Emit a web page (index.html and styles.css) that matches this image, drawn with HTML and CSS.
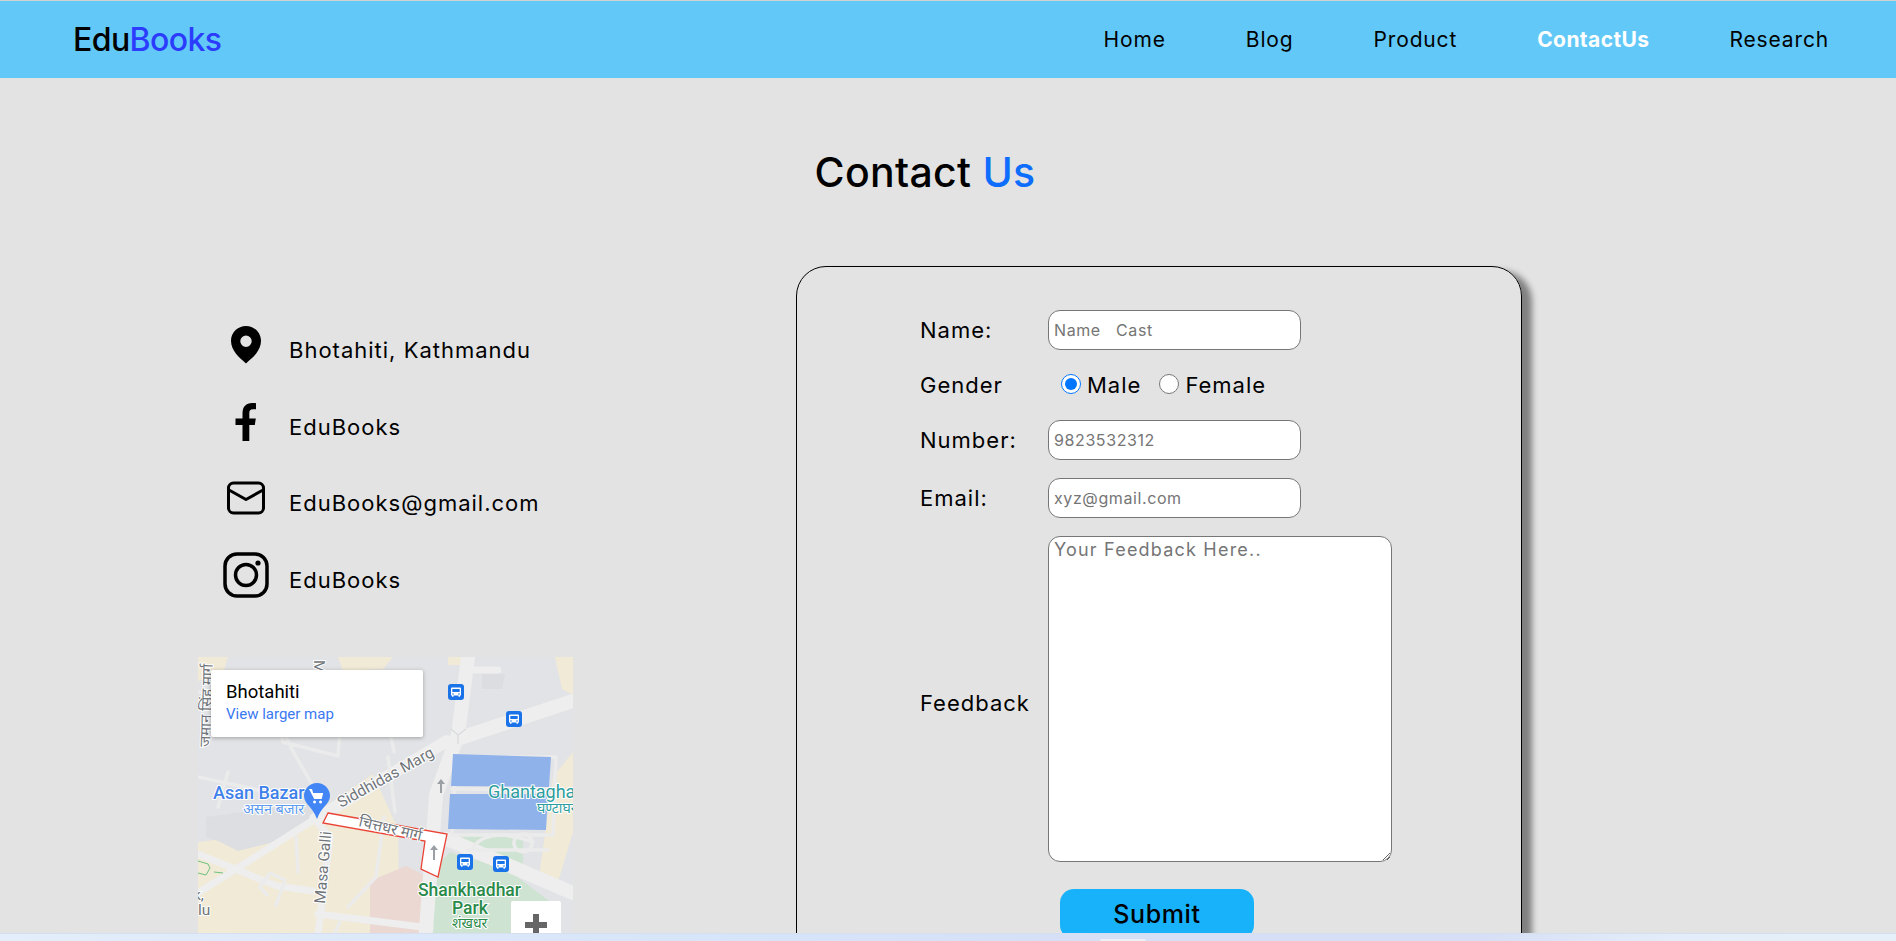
FILE: index.html
```html
<!DOCTYPE html>
<html lang="en">
<head>
    <meta charset="UTF-8">
    <meta name="viewport" content="width=device-width, initial-scale=1.0">
    <title>EduBooks - Contact Us</title>
    <link rel="stylesheet" href="styles.css">
</head>
<body>

<header class="topbar">
    <div class="logo">Edu<span>Books</span></div>
    <nav class="nav">
        <a href="#">Home</a>
        <a href="#">Blog</a>
        <a href="#">Product</a>
        <a href="#" class="active">ContactUs</a>
        <a href="#">Research</a>
    </nav>
</header>

<h1 class="title">Contact <span>Us</span></h1>

<main class="content">
    <section class="side">
        <ul class="info">
            <li>
                <svg class="icon" width="48" height="48" viewBox="0 0 48 48">
                    <path fill-rule="evenodd" d="M24 5C15.7 5 9 11.6 9 19.800c0 5 2 8.700 4.800 12.700C16.800 36.500 20.500 39 24 42.500c3.500-3.500 7.200-6 10.200-10C37 28.500 39 24.800 39 19.800 39 11.600 32.300 5 24 5zm0 9.500a5.700 5.700 0 1 1 0 11.400 5.700 5.700 0 0 1 0-11.400z"/>
                </svg>
                <span>Bhotahiti, Kathmandu</span>
            </li>
            <li>
                <svg class="icon" width="48" height="48" viewBox="0 0 48 48">
                    <path d="M20.500 43V27h-7v-6.500h7v-5.300c0-6.500 3.700-10.200 9.500-10.200 1.700 0 3.200.1 4 .3v6h-3c-2.800 0-3.700 1.500-3.700 3.800v5.400h6.500l-1 6.500h-5.500v16z"/>
                </svg>
                <span>EduBooks</span>
            </li>
            <li>
                <svg class="icon" width="48" height="48" viewBox="0 0 48 48" fill="none" stroke="#000" stroke-width="3" stroke-linecap="round" stroke-linejoin="round">
                    <rect x="6.500" y="9" width="35" height="30" rx="5"/>
                    <path d="M7 16l17 9.500L41 16"/>
                </svg>
                <span>EduBooks@gmail.com</span>
            </li>
            <li>
                <svg class="icon" width="48" height="48" viewBox="0 0 48 48" fill="none" stroke="#000" stroke-width="3.500">
                    <rect x="3" y="3" width="42" height="42" rx="12"/>
                    <circle cx="24" cy="24" r="10.500"/>
                    <circle cx="36" cy="12" r="2.600" fill="#000" stroke="none"/>
                </svg>
                <span>EduBooks</span>
            </li>
        </ul>

        <div class="map">
            <svg class="map-art" width="375" height="300" viewBox="0 0 375 300">
                <symbol id="bus" viewBox="0 0 16 16">
                    <rect width="16" height="16" rx="3" fill="#1a73e8"/>
                    <path fill="#fff" d="M4 3.500h8a1 1 0 0 1 1 1v7H12v1.200h-1.500v-1.200h-5v1.200H4v-1.200H3v-7a1 1 0 0 1 1-1zm.3 1.500v3h7.400V5zM5 9.200a.8.8 0 1 0 0 1.600.8.8 0 0 0 0-1.600zm6 0a.8.8 0 1 0 0 1.600.8.8 0 0 0 0-1.600z"/>
                </symbol>

                <rect width="375" height="300" fill="#e2e3e6"/>
                <!-- land areas -->
                <path fill="#f1ead6" d="M0 185l25-3 7-16 55-4 30-5 58-40 25 55 2 108H0z"/>
                <path fill="#f1ead6" d="M0 0h30l-5 16L0 24zM140 0h55l-10 12-40 2z"/>
                <path fill="#f1ead6" d="M357 0h18v38l-11-6zM355 120l20-25v80l-18 60-17-8zM250 0h20l-3 8h-17z"/>
                <path fill="#dcdee2" d="M8 160l104-14 6 12-30 24-48 12-20-10-12-4z"/>
                <path fill="#ebd8d3" d="M172 224l36-15 20 10-5 81h-51z"/>
                <path fill="#cfe3d2" d="M240 207l12-12 58 18 40 30 2 57H232z"/>
                <path fill="#cfe3d2" d="M262 176l63 2 0 30-71-24z"/>
                <path fill="#dcdde1" d="M284 17h23l-3 15h-20z"/>

                <!-- roads -->
                <g class="road">
                    <path class="road-lg" d="M270 0l-10 78-22 60-12 162M259 82L375 44M249 182L375 236"/>
                    <path class="road-md" d="M117 162L249 84"/>
                    <path class="road-sm" d="M117 162L0 236M117 162l15 19-12 96M0 197l79 32 36 5M120 257l112 14M277 13h23"/>
                    <path class="road-xs" d="M0 35l60 6 20 20 13 30 22 38M75 43l10 42 55 14 3-40 48 10 5 26M0 120l75 16M30 115l-10 35M190 100l7 55M150 250l28-30 8-60M100 215l-2-35M78 248l9-25 -15-7-10 14 7 8M130 290l12-25"/>
                    <path class="road-xs" d="M258 100h100l-3 78H254zM254 132h100"/>
                    <path class="road-xs" d="M275 190c15-18 40-12 60-5M325 195a9 9 0 1 1 .1 0M270 193l80 0"/>
                </g>
                <path fill="none" stroke="#d9dadd" stroke-width="1.200" d="M253 72l7 6 8-6M260 78v9"/>
                <path fill="none" stroke="#6cc27f" stroke-width="1" d="M0 204l10 3 2 4-4 7-8-2M16 215l9 1"/>

                <!-- ponds -->
                <path fill="#8fb2ea" d="M255 97l98 3-2 30-98-1zM252 137h98l-2 36-98-1z"/>

                <!-- selected street -->
                <path fill="#fff" stroke="#ea4335" stroke-width="1.300" d="M130 156l119 21-9 43-17-8 4-28-102-18z"/>

                <!-- labels -->
                <text class="lbl lbl-road" transform="translate(143 151) rotate(-29)">Siddhidas Marg</text>
                <text class="lbl lbl-road" transform="translate(127 247) rotate(-85)">Masa Galli</text>
                <text class="lbl lbl-road lbl-hi" transform="translate(160 169) rotate(13.500)">चित्तधर मार्ग</text>
                <text class="lbl lbl-road lbl-hi" transform="translate(12 90) rotate(-88)">जमान सिंह मार्ग</text>
                <text class="lbl lbl-road" transform="translate(116 3) rotate(90)">Ma</text>
                <text class="lbl lbl-blue" x="15" y="142">Asan Bazar</text>
                <text class="lbl lbl-blue-hi" x="45" y="157">असन बजार</text>
                <text class="lbl lbl-teal" x="290" y="141">Ghantagha</text>
                <text class="lbl lbl-teal-hi" x="339" y="156">घण्टाघर</text>
                <text class="lbl lbl-green" x="220" y="239">Shankhadhar</text>
                <text class="lbl lbl-green" x="254" y="257">Park</text>
                <text class="lbl lbl-green-hi" x="254" y="271">शंखधर</text>
                <text class="lbl lbl-road" x="-5" y="243">k,</text>
                <text class="lbl lbl-road" x="0" y="258">lu</text>

                <!-- arrows -->
                <path fill="#9aa0a6" d="M243 122l-4 5h3v9h2v-9h3zM236 188l-4 5h3v10h2v-10h3z"/>

                <!-- pin -->
                <path fill="#4285f4" d="M119 126c-7.200 0-13 5.800-13 13 0 8 9 11 13 23 4-12 13-15 13-23 0-7.200-5.800-13-13-13z"/>
                <path fill="#fff" d="M111 132h3l1.200 4h10l-1.500 6h-7.500zM116.500 143.500a1.500 1.500 0 1 0 .1 0zM122.500 143.500a1.500 1.500 0 1 0 .1 0z"/>

                <use href="#bus" x="250" y="27" width="16" height="16"/>
                <use href="#bus" x="308" y="54" width="16" height="16"/>
                <use href="#bus" x="259" y="197" width="16" height="16"/>
                <use href="#bus" x="295" y="199" width="16" height="16"/>
            </svg>
            <div class="map-card">
                <div class="map-name">Bhotahiti</div>
                <a href="#" class="map-link">View larger map</a>
            </div>
            <div class="map-zoom">
                <svg width="24" height="24" viewBox="0 0 24 24"><path fill="#666" d="M9 1h6v8h8v6h-8v8H9v-8H1V9h8z"/></svg>
            </div>
        </div>
    </section>

    <form class="contact-box">
        <label for="name">Name:</label>
        <input type="text" id="name" placeholder="Name   Cast">

        <label>Gender</label>
        <div class="gender">
            <input type="radio" name="gender" id="male" checked>
            <label for="male">Male</label>
            <input type="radio" name="gender" id="female">
            <label for="female">Female</label>
        </div>

        <label for="number">Number:</label>
        <input type="text" id="number" placeholder="9823532312">

        <label for="email">Email:</label>
        <input type="email" id="email" placeholder="xyz@gmail.com">

        <label for="feedback" class="feedback-label">Feedback</label>
        <textarea id="feedback" placeholder="Your Feedback Here.."></textarea>

        <button type="submit" class="submit">Submit</button>
    </form>
</main>

<div class="taskbar"><span></span></div>

</body>
</html>
```

FILE: styles.css
```css
html, body {
    height: 941px;
    overflow: hidden;
}
body {
    margin: 0;
    font-family: Inter, "Open Sans", sans-serif;
    background-color: #e3e3e3;
    color: #000;
    border-top: 1px solid #d2d2d2;
    box-sizing: border-box;
}
.topbar {
    height: 77px;
    display: flex;
    align-items: center;
    justify-content: space-between;
    padding: 0 67px 0 73px;
    background-color: #62c8f7;
}
.logo {
    font-size: 32px;
    font-weight: 500;
    letter-spacing: -0.6px;
}
.logo span {
    color: #2b3cff;
}
.nav {
    display: flex;
    gap: 80px;
}
.nav a {
    color: #000;
    font-size: 21px;
    letter-spacing: 0.85px;
    text-decoration: none;
}
.nav a.active {
    color: #fff;
    font-weight: 700;
    letter-spacing: 0.4px;
}
.title {
    margin: 0;
    padding: 63px 46px 0 0;
    height: 188px;
    box-sizing: border-box;
    text-align: center;
    font-size: 41px;
    font-weight: 500;
    letter-spacing: 0.3px;
    line-height: 62px;
}
.title span {
    color: #0d6efd;
}
.content {
    display: flex;
    align-items: flex-start;
    padding-left: 198px;
}
.side {
    width: 375px;
    margin-right: 223px;
    padding-top: 46px;
}
.info {
    list-style: none;
    margin: 0;
    padding: 0 0 0 24px;
}
.info li {
    display: flex;
    align-items: center;
    gap: 19px;
    height: 76.500px;
    font-size: 22px;
    letter-spacing: 1px;
}
.icon {
    flex: none;
    margin-bottom: 10px;
}
.map {
    position: relative;
    width: 375px;
    height: 300px;
    margin-top: 39px;
    overflow: hidden;
}
.map-art {
    display: block;
}
.map-card {
    position: absolute;
    left: 13px;
    top: 13px;
    width: 212px;
    height: 67px;
    padding: 12px 15px;
    box-sizing: border-box;
    background-color: #fff;
    border-radius: 2px;
    box-shadow: 0 1px 4px rgba(0, 0, 0, 0.3);
    font-family: Roboto, sans-serif;
}
.map-name {
    font-size: 18.500px;
    line-height: 21px;
}
.map-link {
    display: block;
    margin-top: 2px;
    color: #3a78f2;
    font-size: 15px;
    line-height: 18px;
    text-decoration: none;
}
.map-zoom {
    position: absolute;
    left: 313px;
    top: 244px;
    width: 50px;
    height: 50px;
    padding-top: 12px;
    box-sizing: border-box;
    text-align: center;
    background-color: #fff;
    border-radius: 2px;
}
.road path {
    fill: none;
    stroke: #eeeeee;
    stroke-linecap: round;
    stroke-linejoin: round;
}
.road-lg { stroke-width: 14px; }
.road-md { stroke-width: 12px; }
.road-sm { stroke-width: 7px; }
.road .road-xs { stroke-width: 3.500px; stroke: #ebebeb; }
.lbl {
    font-family: Roboto, "Noto Sans", sans-serif;
    paint-order: stroke;
    stroke: #fff;
    stroke-width: 2px;
}
.lbl-road {
    fill: #70757a;
    font-size: 15.500px;
}
.lbl-hi {
    font-size: 15px;
}
.lbl-blue {
    fill: #3f81ea;
    font-size: 18px;
    font-weight: 500;
}
.lbl-blue-hi {
    fill: #5c9bf0;
    font-size: 14.500px;
}
.lbl-teal {
    fill: #2c9ea0;
    font-size: 18px;
}
.lbl-teal-hi {
    fill: #2c9ea0;
    font-size: 14px;
}
.lbl-green {
    fill: #2a8a4a;
    font-size: 17.500px;
    font-weight: 500;
}
.lbl-green-hi {
    fill: #2a8a4a;
    font-size: 14px;
}
.contact-box {
    flex: none;
    display: grid;
    grid-template-columns: 128px 344px;
    grid-template-rows: 40px 34px 40px 40px 326px 59px;
    gap: 18px 0;
    align-items: center;
    justify-items: start;
    width: 726px;
    height: 800px;
    padding: 43px 0 0 123px;
    box-sizing: border-box;
    border: 1px solid #000;
    border-radius: 30px;
    box-shadow: 10px 5px 6px #808080;
    font-size: 22px;
    letter-spacing: 1px;
}
.feedback-label {
    margin-top: 8px;
}
.contact-box input[type="text"],
.contact-box input[type="email"] {
    width: 253px;
    height: 40px;
    padding: 0 5px;
    box-sizing: border-box;
    border: 1px solid #767676;
    border-radius: 12px;
    font-family: inherit;
    font-size: 16px;
    letter-spacing: 0.6px;
}
.contact-box textarea {
    width: 344px;
    height: 326px;
    padding: 2px 5px;
    box-sizing: border-box;
    border: 1px solid #767676;
    border-radius: 12px;
    font-family: inherit;
    font-size: 18px;
    letter-spacing: 1.200px;
}
.gender {
    display: flex;
    align-items: center;
    padding-left: 13px;
}
.gender input {
    width: 20px;
    height: 20px;
    margin: 0 6px 3px 0;
}
.gender label {
    margin-right: 18px;
}
.submit {
    grid-column: 2;
    width: 194px;
    height: 50px;
    margin: 9px 0 0 12px;
    border: none;
    border-radius: 14px;
    background-color: #18b2fb;
    font-family: inherit;
    font-size: 25px;
    font-weight: 500;
    letter-spacing: 0.6px;
    cursor: pointer;
}
.taskbar {
    position: fixed;
    left: 0;
    right: 0;
    bottom: 0;
    height: 8px;
    background: linear-gradient(90deg, #e3eefa 0%, #d6e4f9 40%, #d5dff6 60%, #d6dff5 78%, #e3edf9 88%, #e6f0fa 100%);
    border-top: 1px solid #d5dff0;
    box-sizing: border-box;
}
.taskbar span {
    position: absolute;
    left: 1100px;
    bottom: 0;
    width: 46px;
    height: 2px;
    background-color: #eef1f8;
    border-radius: 3px 3px 0 0;
}
```
